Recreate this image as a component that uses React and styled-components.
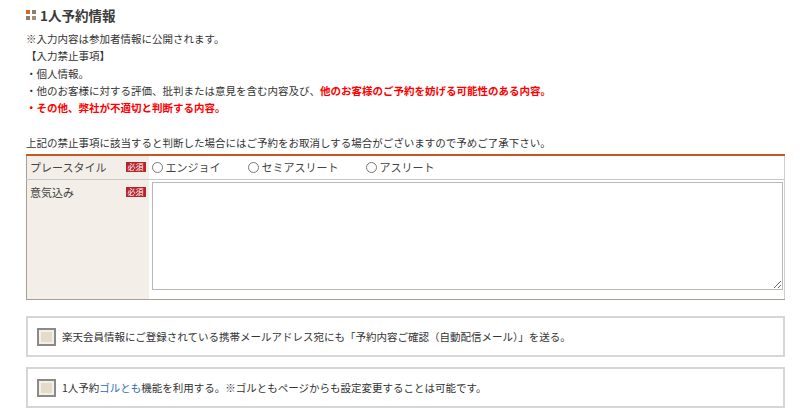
import React from "react";
import styled, { createGlobalStyle } from "styled-components";

const GlobalStyle = createGlobalStyle`
body {
  margin: 0;
  background: #fff;
  color: #333;
  font-family: "Noto Sans CJK JP", "Noto Sans", sans-serif;
  font-size: 10.5px;
}
`;

const Page = styled.div`
  padding: 5px 15px 0 26px;
`;

const Heading = styled.h2`
  display: flex;
  align-items: center;
  gap: 4px;
  margin: 0;
  height: 20px;
  font-size: 13.5px;
  font-weight: bold;
  color: #3a3a3a;
`;

const Mark = styled.span`
  display: grid;
  grid-template-columns: 4px 4px;
  grid-template-rows: 4px 4px;
  gap: 2px;
`;

const Dot = styled.span`
  background: ${(p) => p.$c};
`;

const Notes = styled.div`
  margin-top: 5px;
  line-height: 17.3px;
`;

const Red = styled.span`
  color: #f00;
  font-weight: bold;
`;

const Table = styled.table`
  width: 100%;
  margin-top: 3px;
  border-collapse: collapse;
  border-top: 2px solid #c9581f;
  border-left: 1px solid #a89e92;
  border-right: 1px solid #cfcfcf;
  border-bottom: 1px solid #a89e92;
`;

const Row = styled.tr`
  & + & {
    border-top: 1px solid #c8c8c8;
  }
`;

const Label = styled.th`
  width: 122px;
  padding: ${(p) => (p.$top ? "4px 3px 0 3px" : "0 3px")};
  height: ${(p) => p.$h}px;
  background: #f3efe8;
  font-weight: normal;
  text-align: left;
  vertical-align: ${(p) => (p.$top ? "top" : "middle")};
  box-sizing: border-box;
`;

const LabelInner = styled.div`
  display: flex;
  justify-content: space-between;
  align-items: ${(p) => (p.$top ? "flex-start" : "center")};
  font-size: 11px;
  color: #444;
  line-height: 16px;
`;

const Badge = styled.span`
  display: inline-flex;
  align-items: center;
  justify-content: center;
  width: 20px;
  height: 10px;
  margin-top: ${(p) => (p.$top ? "3px" : "0")};
  background: #b8232c;
  color: #fff;
  font-size: 8px;
  line-height: 10px;
`;

const Cell = styled.td`
  padding: ${(p) => p.$pad};
  vertical-align: ${(p) => (p.$top ? "top" : "middle")};
`;

const Radios = styled.div`
  display: flex;
  align-items: center;
`;

const RadioLabel = styled.label`
  display: flex;
  align-items: center;
  gap: 3px;
  margin-right: 27px;
  font-size: 11px;
  color: #444;
`;

const Radio = styled.input`
  appearance: none;
  margin: 0;
  width: 11px;
  height: 11px;
  border: 1px solid #777;
  border-radius: 50%;
  background: #fff;
`;

const Textarea = styled.textarea`
  display: block;
  width: 100%;
  height: 108px;
  margin: 0;
  box-sizing: border-box;
  border: 1px solid #b8b8b8;
  font-family: inherit;
`;

const Options = styled.div`
  display: flex;
  flex-direction: column;
  gap: 10px;
  margin-top: 16px;
`;

const OptionBox = styled.label`
  display: flex;
  align-items: center;
  gap: 6px;
  height: 41px;
  padding: 0 9px;
  box-sizing: border-box;
  border: 2px solid #d6d6d6;
`;

const Check = styled.input`
  appearance: none;
  margin: 2px 0 0 0;
  width: 19px;
  height: 18px;
  box-sizing: border-box;
  border: 2px solid #8a8a8a;
  background: #e4dbc9;
  box-shadow: inset 0 0 0 2px #f4f0e8;
`;

const Link = styled.a`
  color: #2c6db6;
  text-decoration: none;
`;

const App = () => {
  return (
    <>
      <GlobalStyle />
      <Page>
        <Heading>
          <Mark>
            <Dot $c="#cf6a2c" />
            <Dot $c="#8d7c6c" />
            <Dot $c="#8d7c6c" />
            <Dot $c="#9e8f80" />
          </Mark>
          1人予約情報
        </Heading>
        <Notes>
          ※入力内容は参加者情報に公開されます。
          <br />
          【入力禁止事項】
          <br />
          ・個人情報。
          <br />
          ・他のお客様に対する評価、批判または意見を含む内容及び、
          <Red>他のお客様のご予約を妨げる可能性のある内容。</Red>
          <br />
          <Red>・その他、弊社が不適切と判断する内容。</Red>
          <br />
          <br />
          上記の禁止事項に該当すると判断した場合にはご予約をお取消しする場合がございますので予めご了承下さい。
        </Notes>
        <Table>
          <tbody>
            <Row>
              <Label $h={24}>
                <LabelInner>
                  プレースタイル<Badge>必須</Badge>
                </LabelInner>
              </Label>
              <Cell $pad="0 3px">
                <Radios>
                  <RadioLabel>
                    <Radio type="radio" name="style" />
                    エンジョイ
                  </RadioLabel>
                  <RadioLabel>
                    <Radio type="radio" name="style" />
                    セミアスリート
                  </RadioLabel>
                  <RadioLabel>
                    <Radio type="radio" name="style" />
                    アスリート
                  </RadioLabel>
                </Radios>
              </Cell>
            </Row>
            <Row>
              <Label $top $h={119}>
                <LabelInner $top>
                  意気込み<Badge $top>必須</Badge>
                </LabelInner>
              </Label>
              <Cell $top $pad="2px 1px 9px 3px">
                <Textarea />
              </Cell>
            </Row>
          </tbody>
        </Table>
        <Options>
          <OptionBox>
            <Check type="checkbox" />
            楽天会員情報にご登録されている携帯メールアドレス宛にも「予約内容ご確認（自動配信メール）」を送る。
          </OptionBox>
          <OptionBox>
            <Check type="checkbox" />
            <span>
              1人予約<Link href="#">ゴルとも</Link>
              機能を利用する。※ゴルともページからも設定変更することは可能です。
            </span>
          </OptionBox>
        </Options>
      </Page>
    </>
  );
};

export default App;
